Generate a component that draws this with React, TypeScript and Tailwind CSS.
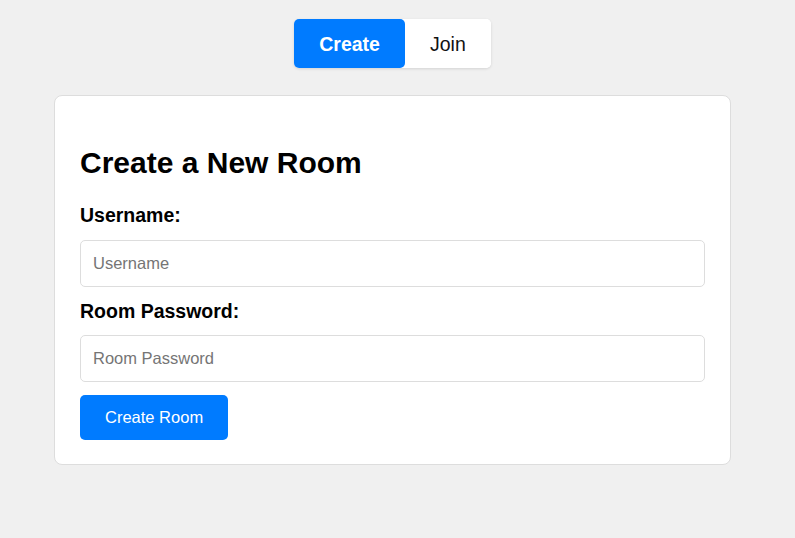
import { useState } from "react";

export default function App() {
  const [tab, setTab] = useState<"create" | "join">("create");

  return (
    <div className="min-h-screen bg-[#f0f0f0] font-['Liberation_Sans',Arial,sans-serif] text-black">
      <div className="flex flex-col items-center pr-[10px] pt-[19px]">
        {/* Tabs */}
        <div className="flex rounded-[5px] bg-white shadow-[0_1px_3px_rgba(0,0,0,0.12)]">
          <button
            onClick={() => setTab("create")}
            className={`h-[49px] rounded-[5px] px-[25px] text-[19.5px] leading-[22px] ${
              tab === "create" ? "bg-[#007bff] font-bold text-white" : "bg-white text-[#111]"
            }`}
          >
            Create
          </button>
          <button
            onClick={() => setTab("join")}
            className={`h-[49px] rounded-[5px] px-[25px] text-[19.5px] leading-[22px] ${
              tab === "join" ? "bg-[#007bff] font-bold text-white" : "bg-white text-[#111]"
            }`}
          >
            Join
          </button>
        </div>

        {/* Card */}
        <div className="mt-[27px] w-[677px] rounded-[8px] border border-[#ddd] bg-white px-[25px] pb-[24px] pt-[25px]">
          <h2 className="mt-[25px] text-[30px] font-bold leading-[34px]">Create a New Room</h2>

          <label className="mt-[24px] block text-[19.5px] font-bold leading-[22px]">Username:</label>
          <input
            type="text"
            placeholder="Username"
            className="mt-[14px] block h-[47px] w-full rounded-[5px] border border-[#ddd] px-[12px] text-[16.5px] outline-none placeholder:text-[#757575]"
          />

          <label className="mt-[13px] block text-[19.5px] font-bold leading-[22px]">Room Password:</label>
          <input
            type="password"
            placeholder="Room Password"
            className="mt-[13px] block h-[47px] w-full rounded-[5px] border border-[#ddd] px-[12px] text-[16.5px] outline-none placeholder:text-[#757575]"
          />

          <button className="mt-[13px] block h-[45px] rounded-[5px] bg-[#007bff] px-[25px] text-[16.5px] text-white">
            Create Room
          </button>
        </div>
      </div>
    </div>
  );
}
